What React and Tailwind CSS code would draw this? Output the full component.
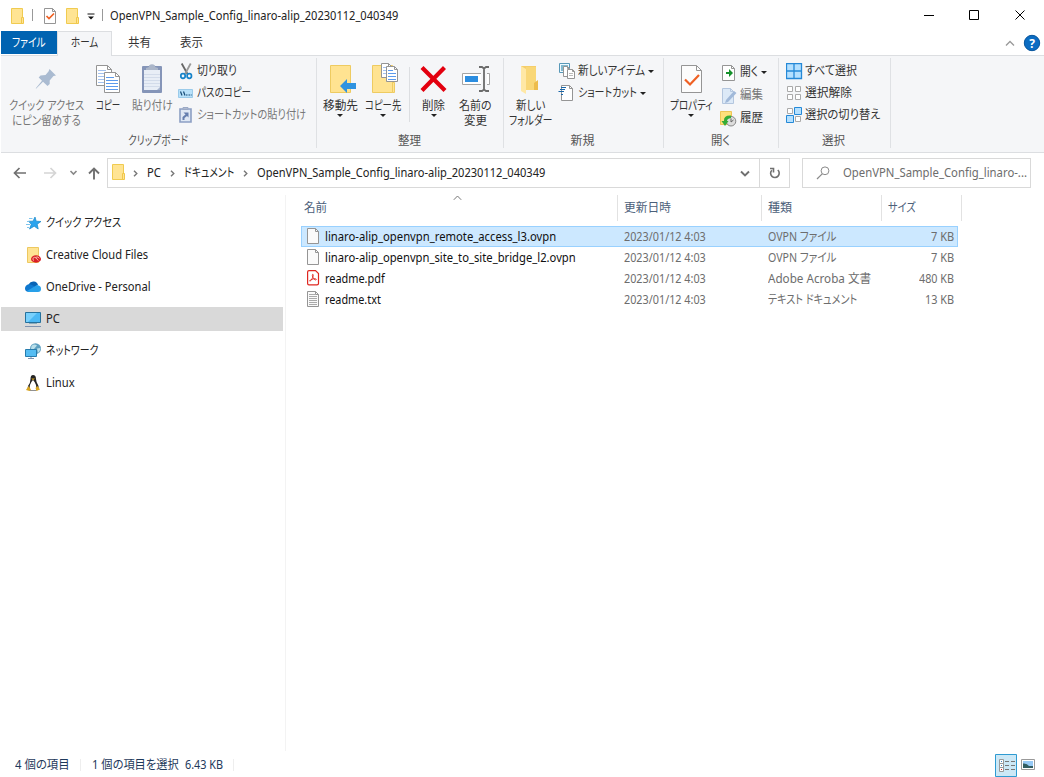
import { useLayoutEffect, useRef, useState } from "react";

/* Text set to an exact advance width, so columns and labels keep their measure in any font. */
function T({ w, children, className = "" }) {
  const ref = useRef(null);
  const [scale, setScale] = useState(1);
  useLayoutEffect(() => {
    const natural = ref.current.offsetWidth;
    if (natural) setScale(w / natural);
  }, [w, children]);
  return (
    <span className={"block shrink-0 whitespace-nowrap " + className} style={{ width: w }}>
      <span ref={ref} className="inline-block origin-left" style={{ transform: `scaleX(${scale})` }}>
        {children}
      </span>
    </span>
  );
}

/* Drawing on its own canvas; (x, y) is the origin used by the shapes inside. */
function Art({ x, y, w, h, className = "", children }) {
  return (
    <svg width={w} height={h} viewBox={`${x} ${y} ${w} ${h}`} fill="none" className={"block shrink-0 " + className}>
      {children}
    </svg>
  );
}

function Folder({ className = "" }) {
  return (
    <Art x={0} y={0} w={14} h={16} className={className}>
      <path d="M.5 .5H11.5V15.5H.5Z" fill="#ffe493" stroke="#f0cb50" />
      <path d="M10.5 9.5H12.5V15.5H10.5Z" fill="#ffe493" stroke="#f0c74a" />
    </Art>
  );
}

function Caret({ className = "" }) {
  return (
    <Art x={0} y={0} w={6} h={3} className={className}>
      <path d="M0 0H6L3 3Z" fill="#222" />
    </Art>
  );
}

function Chevron({ className = "" }) {
  return (
    <Art x={0} y={0} w={5} h={7} className={className}>
      <path d="M1 .7L3.8 3.5L1 6.3" stroke="#777" strokeWidth="1.4" />
    </Art>
  );
}

function Page({ x, y, w, h, f = 4, fill = "#fff", stroke = "#959595" }) {
  return (
    <>
      <path d={`M${x} ${y}H${x + w - f}L${x + w} ${y + f}V${y + h}H${x}Z`} fill={fill} stroke={stroke} />
      <path d={`M${x + w - f} ${y}V${y + f}H${x + w}`} stroke={stroke} />
    </>
  );
}

function Large({ className, icon, lines, caret, dim }) {
  return (
    <div className={"flex shrink-0 flex-col items-center leading-[15px] " + (dim ? "text-[#777] " : "text-[#333] ") + className}>
      <div className="h-[34px]">{icon}</div>
      {lines.map(([t, w]) => (
        <T key={t} w={w}>{t}</T>
      ))}
      {caret && <Caret className="mt-px" />}
    </div>
  );
}

function Small({ icon, text, w, caret, dim }) {
  return (
    <div className={"flex h-[22px] items-center " + (dim ? "text-[#777]" : "text-[#333]")}>
      <div className="w-[19px] shrink-0">{icon}</div>
      <T w={w}>{text}</T>
      {caret && <Caret className="ml-[3px]" />}
    </div>
  );
}

function Group({ className, pad, label, labelW, children }) {
  return (
    <section className={"flex shrink-0 flex-col border-r border-[#dfe1e4] " + className}>
      <div className={"flex h-[78px] pt-[6px] " + pad}>{children}</div>
      <div className="mr-[2px] flex justify-center leading-[14px] text-[#555]">
        <T w={labelW}>{label}</T>
      </div>
    </section>
  );
}

function Ribbon() {
  return (
    <div className="ml-px flex h-[98px] border-y border-[#dcdee1] bg-[#f5f6f8] pt-[2px] pb-[4px]">
      <Group className="w-[316px]" pad="pl-[4px]" label="クリップボード" labelW={60}>
        <Large className="w-[82px]" dim lines={[["クイック アクセス", 75], ["にピン留めする", 69]]}
          icon={<Art x={35} y={64} w={24} h={32}>
            <path d="M50.5 69L57 75.5L54.5 76L50.7 80.4V84L48.5 86L44 81.7L37 88.7L36.8 88.2L43 80.7L39.7 77.5L41.5 75.5L46.5 75L49.5 71.5Z" fill="#aabbd1" />
          </Art>} />
        <Large className="w-[42px]" lines={[["コピー", 24]]}
          icon={<Art x={95} y={64} w={26} h={32}>
            <Page x={96.5} y={65.5} w={15} h={20} />
            <path d="M98 70.5H106M98 73.5H104M98 76.5H104M98 79.5H104M98 82.5H104" stroke="#a3c1ee" />
            <Page x={104.5} y={72.5} w={15} h={20} />
            <path d="M106 77.5H114M106 80.5H118M106 83.5H118M106 86.5H118M106 89.5H118" stroke="#5b9aec" />
          </Art>} />
        <Large className="w-[46px]" dim lines={[["貼り付け", 41]]}
          icon={<Art x={141} y={64} w={23} h={32}>
            <rect x="142" y="66" width="20" height="27" rx="1" fill="#8595b8" />
            <path d="M144 70H160V90H144Z" fill="#e8eef6" />
            <path d="M144 74.5H160M144 77.5H160M144 80.5H160M144 83.5H160M144 86.5H160" stroke="#d3dcea" />
            <path d="M157 90L160 87V90Z" fill="#a8b6cf" />
            <path d="M146 70V68L149 67V65.5Q152 63 155 65.5V67L158 68V70Z" fill="#abb6c9" />
          </Art>} />
        <div className="-mt-[4px] flex flex-col pl-[3px]">
          <Small text="切り取り" w={40} icon={<Art x={178} y={63} w={16} h={17}>
            <path d="M181.7 63.5L187.5 74" stroke="#666" strokeWidth="1.8" />
            <path d="M190.7 63.5L185 74" stroke="#9a9a9a" strokeWidth="1.8" />
            <ellipse cx="183" cy="76" rx="2.2" ry="2.3" stroke="#1683c9" strokeWidth="1.7" />
            <ellipse cx="189.3" cy="76" rx="2.2" ry="2.3" stroke="#1683c9" strokeWidth="1.7" />
          </Art>} />
          <Small text="パスのコピー" w={54} icon={<Art x={178} y={85} w={16} h={17}>
            <path d="M178.5 89.5H192.5V97.5H178.5Z" fill="#b8e1fa" stroke="#9bcbea" />
            <path d="M180.5 91.5L182 95.5M183.5 91.5L185 95.5M186 95H187.5M188.5 95H190M190.7 95H191.7" stroke="#174c78" strokeWidth="1.2" />
          </Art>} />
          <Small dim text="ショートカットの貼り付け" w={109} icon={<Art x={178} y={107} w={16} h={17}>
            <path d="M180 109H191V122H180Z" fill="#dfe8f4" stroke="#8c9fc3" strokeWidth="1.6" />
            <path d="M183 109.5V107.5H188V109.5Z" fill="#aeb9cf" stroke="#9ba9c5" />
            <path d="M182.5 120V117L185.5 114.5L183.5 112.5H188.5V117.5L187 116L184.5 118V120Z" fill="#667fae" />
          </Art>} />
        </div>
      </Group>

      <Group className="w-[187px]" pad="pl-[2px]" label="整理" labelW={23}>
        <Large className="w-[42px]" caret lines={[["移動先", 35]]}
          icon={<Art x={330} y={64} w={28} h={32} className="translate-x-[3px]">
            <path d="M331.5 65.5H351.5V92.5H331.5Z" fill="#ffe391" stroke="#eecb61" />
            <path d="M341 86L348 79V83H357V89H348V93Z" fill="#2f93e0" />
          </Art>} />
        <Large className="w-[44px]" caret lines={[["コピー先", 36]]}
          icon={<Art x={372} y={63} w={28} h={32} className="translate-x-[2px] -translate-y-px">
            <path d="M373.5 65.5H393.5V92.5H373.5Z" fill="#ffe391" stroke="#eecb61" />
            <path d="M393.5 82.5H395.5V92.5H393.5Z" fill="#ffe391" stroke="#eecb61" />
            <Page x={382.5} y={63.5} w={10} h={14} f={3} />
            <path d="M384 67.5H388M384 70.5H388M384 73.5H388" stroke="#a3c1ee" />
            <Page x={387.5} y={66.5} w={11} h={15} f={3} />
            <path d="M389 70.5H394M389 73.5H397M389 76.5H397M389 79.5H397" stroke="#5b9aec" />
          </Art>} />
        <div className="mr-[3px] ml-[4px] mt-[3px] h-[55px] w-px shrink-0 bg-[#dcdee1]" />
        <Large className="w-[41px]" caret lines={[["削除", 23]]}
          icon={<Art x={421} y={64} w={27} h={32}>
            <path d="M423 67.5L446 90.5M445.5 67.5L423 90.5" stroke="#e3000f" strokeWidth="4.2" />
          </Art>} />
        <Large className="w-[42px]" lines={[["名前の", 33], ["変更", 23]]}
          icon={<Art x={461} y={64} w={30} h={32} className="translate-x-px">
            <path d="M462.5 73.5H489.5V84.5H462.5Z" fill="#fff" stroke="#a4a4a4" />
            <path d="M465 76H478V82H465Z" fill="#2b8de0" />
            <path d="M481 72H487V86H481Z" fill="#f5f6f8" />
            <path d="M484 68V90M479 67H482L484 68.5L486 67H489M479 91H482L484 89.5L486 91H489" stroke="#6b6b6b" strokeWidth="1.8" />
          </Art>} />
      </Group>

      <Group className="w-[160px]" pad="pl-[3px]" label="新規" labelW={24}>
        <Large className="w-[47px]" lines={[["新しい", 29], ["フォルダー", 43]]}
          icon={<Art x={519} y={64} w={23} h={32}>
            <path d="M521 66H536V90H521Z" fill="#f5ce6b" />
            <path d="M521 66L526 69V94L521 91Z" fill="#ffe8a5" />
            <path d="M526 67H536V83L538 81V90H526Z" fill="#f9d777" />
            <path d="M534 83L538 80V90H534Z" fill="#edbc4c" />
          </Art>} />
        <div className="-mt-[4px] flex flex-col pl-[5px]">
          <Small caret text="新しいアイテム" w={67} icon={<Art x={559} y={63} w={17} h={17}>
            <path d="M559.5 63.5H569.5V72.5H559.5Z" fill="#eef9ff" stroke="#5798b8" />
            <path d="M561 65H568V71H561Z" fill="#81bad0" />
            <Page x={563.5} y={66.5} w={6} h={10} f={2} />
            <Page x={567.5} y={69.5} w={7} h={9} f={2} />
            <path d="M569 73.5H573M569 75.5H573" stroke="#bbb" />
          </Art>} />
          <Small caret text="ショートカット" w={59} icon={<Art x={559} y={85} w={17} h={17} className="-translate-x-px">
            <Page x={562.5} y={85.5} w={11} h={15} f={3} />
            <path d="M562 87.5H567M561 89.5H566M559.5 91.5H565M562 94.5H564" stroke="#1a67a9" strokeWidth="1.2" />
          </Art>} />
        </div>
      </Group>

      <Group className="w-[115px]" pad="pl-[3px]" label="開く" labelW={19}>
        <Large className="w-[48px]" caret lines={[["プロパティ", 43]]}
          icon={<Art x={680} y={64} w={23} h={32}>
            <Page x={681.5} y={65.5} w={20} h={27} f={5} fill="#fcfcfc" />
            <path d="M685 79.5L690 84.5L699 75" stroke="#ef6023" strokeWidth="2.2" />
          </Art>} />
        <div className="-mt-[4px] flex flex-col gap-px pt-px pl-[6px]">
          <Small caret text="開く" w={18} icon={<Art x={721} y={63} w={17} h={17}>
            <Page x={722.5} y={64.5} w={12} h={15} f={3} />
            <path d="M726 71H729V68L733 72L729 76V73H726Z" fill="#15912b" />
          </Art>} />
          <Small dim text="編集" w={23} icon={<Art x={721} y={86} w={17} h={17}>
            <Page x={722.5} y={87.5} w={11} h={15} f={3} fill="#dce9f7" stroke="#b4c6de" />
            <path d="M726 99L734 90L736.5 92L728 101L725 102Z" fill="#a1b9d9" />
          </Art>} />
          <Small text="履歴" w={23} icon={<Art x={720} y={109} w={17} h={17} className="-translate-x-px">
            <path d="M720.5 110.5H731.5V123.5H720.5Z" fill="#ffe07b" stroke="#edc556" />
            <circle cx="731" cy="120.2" r="4.8" fill="#ddd" stroke="#888" />
            <path d="M731 117.5V121L733.5 119" stroke="#666" />
            <path d="M731 114.5Q723.5 114 724 120H721.5L725 125L728.5 120H727Q727 117.5 731 117Z" fill="#36ac36" />
          </Art>} />
        </div>
      </Group>

      <Group className="w-[112px]" pad="pl-[7px]" label="選択" labelW={23}>
        <div className="-mt-[4px] flex flex-col">
          <Small text="すべて選択" w={52} icon={<Art x={786} y={63} w={17} h={17}>
            <path d="M786.5 63.5H801.5V78.5H786.5ZM786.5 71H801.5M794 63.5V78.5" fill="#b4e0ff" stroke="#2589d7" strokeWidth="1.3" />
          </Art>} />
          <Small text="選択解除" w={47} icon={<Art x={786} y={85} w={17} h={17}>
            <path d="M787.5 86.5H792.5V91.5H787.5ZM795.5 86.5H800.5V91.5H795.5ZM787.5 94.5H792.5V99.5H787.5ZM795.5 94.5H800.5V99.5H795.5Z" fill="#fff" stroke="#aaa" />
          </Art>} />
          <Small text="選択の切り替え" w={75} icon={<Art x={786} y={107} w={17} h={17}>
            <path d="M787.5 108.5H792.5V113.5H787.5ZM795.5 116.5H800.5V121.5H795.5Z" fill="#fff" stroke="#aaa" />
            <path d="M794.5 107.5H801.5V114.5H794.5ZM786.5 115.5H793.5V122.5H786.5Z" fill="#b4e0ff" stroke="#2589d7" />
          </Art>} />
        </div>
      </Group>
    </div>
  );
}

const NAV = [
  ["クイック アクセス", 75,
    <g key="a"><path d="M35 217L36.2 221.2L41 221.5L37.2 224.2L38.2 229L34.2 226.2L29.5 229L31.3 224.3L28.5 221.2H33Z" fill="#2ba4ee" stroke="#1686c9" strokeWidth=".7" /><path d="M29 218.5H32.5M27 221.5H29.5M26 224.5H30M27 227.5H29" stroke="#7cc4ec" /></g>, 215],
  ["Creative Cloud Files", 102,
    <g key="b"><path d="M27.5 247.5H38.5V262.5H27.5Z" fill="#ffe493" stroke="#edc860" /><ellipse cx="36" cy="259" rx="5" ry="3.7" fill="#da1f26" /><path d="M34 260.7A1.8 1.8 0 0 1 34.3 257.3Q36 257 38.3 260.6M35.5 257.3Q38.5 256 39.3 258.5" stroke="#fbd9c0" strokeWidth=".8" /></g>, 247],
  ["OneDrive - Personal", 105,
    <g key="c"><path d="M28.5 284.5Q30.5 281 34 281.5Q37 281.7 38 284.8L33 289Z" fill="#0864b5" /><path d="M28.5 292Q25 291.5 25 288.5Q25 285 29 284.3Q31 284 34 286L38 292Z" fill="#0f78cf" /><path d="M27 291L37 285Q41 285.5 41 288.8Q41 292 38 292H28.5Z" fill="#28a0e9" /></g>, 279],
  ["PC", 14,
    <g key="d"><path d="M25.5 312.5H40.5V322.5H25.5Z" fill="#4bb8f4" stroke="#26719c" /><path d="M26 313H37L28 322H26Z" fill="#78d0fc" /><path d="M29 323.5H37" stroke="#8ab" /><path d="M25 326.5H41" stroke="#7f93af" /></g>, 311],
  ["ネットワーク", 52,
    <g key="e"><circle cx="35.5" cy="348.7" r="5.5" fill="#5d9fc0" /><path d="M31.5 346Q34 343.5 37 345.5L34 349H31ZM37 348.5L40.5 348Q40 351.5 38 353Z" fill="#b9dfea" /><path d="M25.5 349.5H36.5V356.5H25.5Z" fill="#55bdf3" stroke="#277cad" /><path d="M31 357V358M28 358.5H34" stroke="#7f93af" /></g>, 343],
  ["Linux", 29,
    <g key="f"><path d="M33 375Q36 375 36 379Q36 382 38.5 386Q39 390 36 390.5H30Q27 390 28 386Q30.5 383 30.5 379Q30.5 375 33 375Z" fill="#252525" /><path d="M33 380Q37 384 36.2 390H29.8Q29 384 33 380Z" fill="#fff" /><path d="M31.3 378.5H35L33 380.3Z" fill="#d8a520" /><path d="M28.5 386L31 389.5L29.5 391L26 390ZM37.5 386L40 389.5L36.5 391L35.5 388Z" fill="#d8a520" /></g>, 375],
];

const FILES = [
  ["linaro-alip_openvpn_remote_access_l3.ovpn", 231, "OVPN ファイル", 69, "7 KB", 23, "blank"],
  ["linaro-alip_openvpn_site_to_site_bridge_l2.ovpn", 251, "OVPN ファイル", 69, "7 KB", 23, "blank"],
  ["readme.pdf", 60, "Adobe Acroba 文書", 103, "480 KB", 35, "pdf"],
  ["readme.txt", 56, "テキスト ドキュメント", 89, "13 KB", 29, "txt"],
];

function FileIcon({ kind }) {
  return (
    <Art x={0} y={0} w={13} h={16} className="-translate-y-px">
      {kind === "pdf" ? (
        <>
          <path d="M2 .6H8.5L11.5 3.5V13.5Q11.5 14.9 10 14.9H2Q.6 14.9 .6 13.5V2Q.6 .6 2 .6Z" fill="#fff" stroke="#df2720" strokeWidth="1.2" />
          <path d="M5.7 4.3C6.8 4.3 6 7 4.8 9.2C3.8 11 2.6 11.6 2.7 10.8C2.8 9.7 6.8 8.4 8.6 8.8C10 9.2 9.2 10.5 8 9.8C6.3 8.8 4.6 5.5 5.7 4.3Z" stroke="#df2720" strokeWidth=".9" />
        </>
      ) : (
        <>
          <Page x={0.5} y={0.5} w={11} h={15} f={3} fill="#fafafa" />
          {kind === "txt" && <path d="M2 3.5H8M2 5.5H10M2 7.5H10M2 9.5H10M2 11.5H10M2 13.5H10" stroke="#aaa" />}
        </>
      )}
    </Art>
  );
}

export default function App() {
  return (
    <div
      className="flex h-[777px] w-[1044px] flex-col overflow-hidden bg-white text-[12px] text-[#222]"
      style={{ fontFamily: '"Noto Sans", "Noto Sans CJK JP", sans-serif', fontFeatureSettings: '"palt"' }}
    >
      <header className="flex h-[31px] shrink-0 items-center pl-[11px]">
        <Folder />
        <div className="-mt-[2px] ml-[7px] h-[12px] w-px bg-[#999]" />
        <Art x={0} y={0} w={13} h={16} className="ml-[11px]">
          <Page x={0.5} y={0.5} w={11} h={15} f={3} />
          <path d="M2.5 8L5 10.5L10 5.5" stroke="#ef6023" strokeWidth="1.7" />
        </Art>
        <Folder className="ml-[9px]" />
        <Art x={0} y={0} w={8} h={8} className="mt-[2px] ml-[7px]">
          <path d="M.5 1H7.5" stroke="#111" />
          <path d="M1 3.5H7L4 6.5Z" fill="#111" />
        </Art>
        <div className="-mt-[2px] ml-[7px] h-[12px] w-px bg-[#999]" />
        <T w={288} className="ml-[7px] leading-[18px]">OpenVPN_Sample_Config_linaro-alip_20230112_040349</T>
        <Art x={923} y={9} w={104} h={12} className="ml-[525px] -translate-y-px text-black">
          <path d="M924 15.5H934M969.5 10.5H978.5V19.5H969.5ZM1015.5 10.5L1024.5 19.5M1024.5 10.5L1015.5 19.5" stroke="currentColor" />
        </Art>
      </header>

      <nav className="relative z-10 -mb-px flex h-[25px] shrink-0 pl-px text-[#333]">
        <div className="flex h-[23px] w-[56px] items-center justify-center bg-[#0063b1] text-white"><T w={34}>ファイル</T></div>
        <div className="flex h-[25px] w-[55px] items-center justify-center border border-b-0 border-[#dcdee1] bg-[#f5f6f8] pb-[2px]"><T w={27}>ホーム</T></div>
        <div className="flex h-[23px] w-[54px] items-center justify-center"><T w={23}>共有</T></div>
        <div className="flex h-[23px] w-[51px] items-center justify-center"><T w={23}>表示</T></div>
        <Art x={1004} y={34} w={38} h={18} className="mt-[3px] ml-auto mr-[2px]">
          <path d="M1006 45.5L1010 41.5L1014 45.5" stroke="#999" strokeWidth="1.3" />
          <circle cx="1032" cy="43" r="7.7" fill="#0b6cc2" stroke="#07559d" />
          <text x="1032" y="47.5" textAnchor="middle" fontSize="12" fontWeight="bold" fill="#fff">?</text>
        </Art>
      </nav>

      <Ribbon />

      <div className="flex h-[40px] shrink-0 items-center pl-[13px]">
        <Art x={13} y={165} w={88} h={16}>
          <path d="M26 173H15M19.5 168L14.5 173L19.5 178" stroke="#707070" strokeWidth="1.7" />
          <path d="M44 173H55M50.5 168L55.5 173L50.5 178" stroke="#d5d5d5" strokeWidth="1.7" />
          <path d="M70.5 171L73.5 174L76.5 171" stroke="#888" strokeWidth="1.6" />
          <path d="M94 179.5V169M89 173.5L94 168.5L99 173.5" stroke="#707070" strokeWidth="1.9" />
        </Art>
        <div className="ml-[6px] flex h-[30px] w-[683px] shrink-0 items-center border border-[#d9d9d9]">
          <Folder className="ml-[4px] -translate-y-px" />
          <Chevron className="ml-[7px]" />
          <T w={14} className="ml-[9px]">PC</T>
          <Chevron className="ml-[9px]" />
          <T w={50} className="ml-[9px]">ドキュメント</T>
          <Chevron className="ml-[9px]" />
          <T w={288} className="ml-[9px]">OpenVPN_Sample_Config_linaro-alip_20230112_040349</T>
          <Art x={740} y={168} w={10} h={12} className="ml-auto mr-[9px]">
            <path d="M741 172.5L745 176.5L749 172.5" stroke="#707070" strokeWidth="1.9" />
          </Art>
          <div className="flex h-full w-[30px] items-center justify-center border-l border-[#d9d9d9]">
            <Art x={768} y={166} w={14} h={14}>
              <path d="M777.8 170A4.3 4.3 0 1 1 771.8 170.2M770 168.5H773.5V172.5" stroke="#707070" strokeWidth="1.6" />
            </Art>
          </div>
        </div>
        <div className="ml-[12px] flex h-[30px] w-[229px] shrink-0 items-center border border-[#d9d9d9] text-[#6d6d6d]">
          <Art x={816} y={166} w={14} h={14} className="ml-[13px]">
            <circle cx="825" cy="170.8" r="3.9" stroke="#8a8a8a" />
            <path d="M822.2 173.8L817 179" stroke="#8a8a8a" strokeWidth="1.2" />
          </Art>
          <T w={184} className="ml-[13px]">OpenVPN_Sample_Config_linaro-...</T>
        </div>
      </div>

      <main className="flex h-[560px] shrink-0">
        <aside className="my-[2px] flex w-[286px] shrink-0 flex-col gap-[8px] border-r border-[#f3f3f3] pt-[16px] pl-px">
          {NAV.map(([t, w, shape, y]) => (
            <div key={t} className={"flex h-[24px] w-[282px] items-center pl-[23px] " + (t === "PC" ? "bg-[#d9d9d9]" : "")}>
              <Art x={24} y={y} w={18} h={16}>{shape}</Art>
              <T w={w} className="ml-[4px]">{t}</T>
            </div>
          ))}
        </aside>
        <section className="flex flex-col pl-[15px]">
          <div className="relative flex h-[33px] pt-[2px] text-[#4c607a]">
            <Art x={0} y={0} w={9} h={6} className="absolute top-[2px] left-[152px]">
              <path d="M.8 4.8L4.5 1L8.2 4.8" stroke="#777" />
            </Art>
            <div className="flex h-[26px] w-[317px] items-center border-r border-[#e2e2e2] pl-[3px]"><T w={23}>名前</T></div>
            <div className="flex h-[26px] w-[144px] items-center border-r border-[#e2e2e2] pl-[6px]"><T w={47}>更新日時</T></div>
            <div className="flex h-[26px] w-[120px] items-center border-r border-[#e2e2e2] pl-[6px]"><T w={24}>種類</T></div>
            <div className="flex h-[26px] w-[80px] items-center border-r border-[#e2e2e2] pl-[6px]"><T w={28}>サイズ</T></div>
          </div>
          {FILES.map(([name, nw, type, tw, size, sw, kind], i) => (
            <div key={name} className={"flex h-[21px] w-[657px] items-center text-[#6d6d6d] " + (i === 0 ? "bg-[#cce8ff] outline outline-1 -outline-offset-1 outline-[#99d1ff]" : "")}>
              <div className="w-[24px] pl-[6px]"><FileIcon kind={kind} /></div>
              <div className="w-[299px] text-[#111]"><T w={nw}>{name}</T></div>
              <div className="w-[144px]"><T w={82}>2023/01/12 4:03</T></div>
              <div className="flex-1"><T w={tw}>{type}</T></div>
              <T w={sw} className="mr-[4px]">{size}</T>
            </div>
          ))}
        </section>
      </main>

      <footer className="flex h-[24px] shrink-0 items-center pl-[15px] text-[#1e395b]">
        <T w={55}>4 個の項目</T>
        <div className="ml-[10px] h-[12px] w-px bg-[#eee]" />
        <T w={87} className="ml-[11px]">1 個の項目を選択</T>
        <T w={38} className="ml-[6px]">6.43 KB</T>
        <div className="ml-[10px] h-[12px] w-px bg-[#eee]" />
        <Art x={995} y={753} w={43} h={23} className="ml-auto mr-[6px]">
          <path d="M995.5 753.5H1016.5V775.5H995.5Z" fill="#cce8f6" stroke="#2f9bd2" />
          <path d="M999.5 758.5H1003.5V762.5H999.5ZM999.5 762.5H1003.5V766.5H999.5ZM999.5 766.5H1003.5V770.5H999.5Z" fill="#fff" stroke="#999" />
          <path d="M1005 760.5H1009M1011 760.5H1015M1005 764.5H1009M1011 764.5H1015M1005 768.5H1009M1011 768.5H1015" stroke="#777" />
          <path d="M1001 760H1002V761H1001ZM1001 764H1002V765H1001Z" fill="#4286c0" />
          <path d="M1001 768H1002V769H1001Z" fill="#d22" />
          <path d="M1021.5 758.5H1034.5V768.5H1021.5Z" fill="#fff" stroke="#999" />
          <path d="M1023 760H1033V767H1023Z" fill="#96c9f5" />
          <path d="M1023 762.5Q1027 762 1029 765H1033V767H1023Z" fill="#315d62" />
        </Art>
      </footer>
    </div>
  );
}
